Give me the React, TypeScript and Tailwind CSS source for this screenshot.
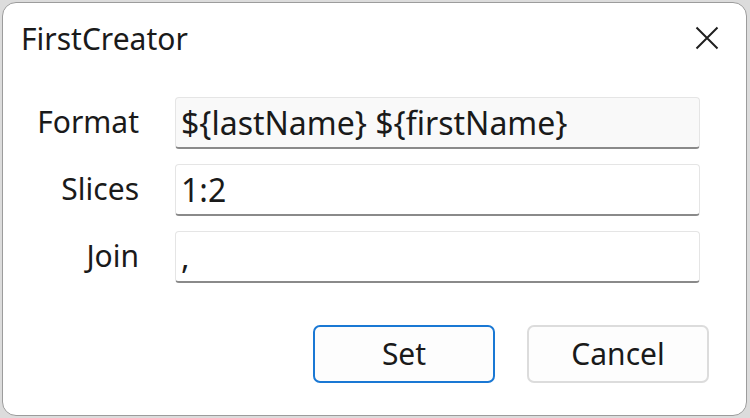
import React from 'react';

const fields = [
  { label: 'Format', value: '${lastName} ${firstName}', bg: 'bg-[#f9f9f9]' },
  { label: 'Slices', value: '1:2', bg: 'bg-white' },
  { label: 'Join', value: ',', bg: 'bg-white' },
];

export default function App() {
  return (
    <div className="w-[750px] h-[418px] bg-[#dcdcdc] pt-[2px] pl-[2px]" style={{ fontFamily: '"Noto Sans", "Open Sans", sans-serif' }}>
      <div className="w-[745px] h-[414px] bg-white border border-[#9c9c9c] rounded-[14px] flex flex-col text-[#1a1a1a]">
        <div className="h-[72px] flex items-center justify-between pl-[18px] pr-[27px]">
          <span className="text-[30px] leading-none">FirstCreator</span>
          <svg width="24" height="24" viewBox="0 0 24 24" className="text-[#1f1f1f] -mt-[2px]">
            <path d="M1.5 1.5 L22.5 22.5 M22.5 1.5 L1.5 22.5" stroke="currentColor" strokeWidth="2" fill="none" />
          </svg>
        </div>
        <div className="flex flex-col gap-[15px] mt-[22px]">
          {fields.map((f) => (
            <div key={f.label} className="flex items-center">
              <div className="w-[136px] text-right text-[30px] leading-none -mt-[3px]">{f.label}</div>
              <div className={`ml-[36px] w-[525px] h-[52px] ${f.bg} border border-[#e5e5e5] border-b-2 border-b-[#8a8a8a] rounded-[4px] flex items-center pl-[5px] text-[32px] leading-none`}>
                {f.value}
              </div>
            </div>
          ))}
        </div>
        <div className="flex justify-end gap-[32px] mt-[42px] pr-[37px]">
          <button className="w-[182px] h-[58px] rounded-[7px] border-2 border-[#1a78d4] bg-[#fdfdfd] text-[30px] leading-none">Set</button>
          <button className="w-[182px] h-[58px] rounded-[7px] border-2 border-[#dcdcdc] bg-[#fdfdfd] text-[30px] leading-none">Cancel</button>
        </div>
      </div>
    </div>
  );
}
